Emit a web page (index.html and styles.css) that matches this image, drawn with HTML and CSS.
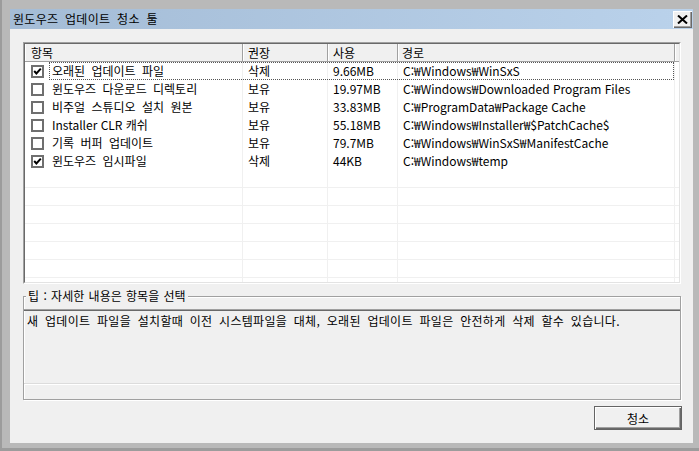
FILE: index.html
```html
<!DOCTYPE html>
<html lang="ko">
<head>
    <meta charset="UTF-8">
    <title>윈도우즈 업데이트 청소 툴</title>
    <link rel="stylesheet" href="styles.css">
</head>
<body>
    <div class="window">
        <div class="titlebar">
            <span class="title">윈도우즈 업데이트 청소 툴</span>
            <button class="close">
                <svg width="11" height="9" viewBox="0 0 11 9"><path d="M1 0.5 L10 8.5 M10 0.5 L1 8.5" stroke="#000" stroke-width="2"/></svg>
            </button>
        </div>
        <div class="content">
            <div class="list">
                <div class="list-body">
                    <div class="row head">
                        <div class="cell">항목</div>
                        <div class="cell">권장</div>
                        <div class="cell">사용</div>
                        <div class="cell">경로</div>
                        <div class="cell"></div>
                    </div>
                    <div class="row focus">
                        <div class="cell"><span class="check on"></span>오래된 업데이트 파일</div>
                        <div class="cell">삭제</div>
                        <div class="cell">9.66MB</div>
                        <div class="cell path">C:₩Windows₩WinSxS</div>
                        <div class="cell"></div>
                    </div>
                    <div class="row">
                        <div class="cell"><span class="check"></span>윈도우즈 다운로드 디렉토리</div>
                        <div class="cell">보유</div>
                        <div class="cell">19.97MB</div>
                        <div class="cell path">C:₩Windows₩Downloaded Program Files</div>
                        <div class="cell"></div>
                    </div>
                    <div class="row">
                        <div class="cell"><span class="check"></span>비주얼 스튜디오 설치 원본</div>
                        <div class="cell">보유</div>
                        <div class="cell">33.83MB</div>
                        <div class="cell path">C:₩ProgramData₩Package Cache</div>
                        <div class="cell"></div>
                    </div>
                    <div class="row">
                        <div class="cell path"><span class="check"></span>Installer CLR 캐쉬</div>
                        <div class="cell">보유</div>
                        <div class="cell">55.18MB</div>
                        <div class="cell path">C:₩Windows₩Installer₩$PatchCache$</div>
                        <div class="cell"></div>
                    </div>
                    <div class="row">
                        <div class="cell"><span class="check"></span>기록 버퍼 업데이트</div>
                        <div class="cell">보유</div>
                        <div class="cell">79.7MB</div>
                        <div class="cell path">C:₩Windows₩WinSxS₩ManifestCache</div>
                        <div class="cell"></div>
                    </div>
                    <div class="row">
                        <div class="cell"><span class="check on"></span>윈도우즈 임시파일</div>
                        <div class="cell">삭제</div>
                        <div class="cell">44KB</div>
                        <div class="cell path">C:₩Windows₩temp</div>
                        <div class="cell"></div>
                    </div>
                    <div class="row empty"><div class="cell"></div><div class="cell"></div><div class="cell"></div><div class="cell"></div><div class="cell"></div></div>
                    <div class="row empty"><div class="cell"></div><div class="cell"></div><div class="cell"></div><div class="cell"></div><div class="cell"></div></div>
                    <div class="row empty"><div class="cell"></div><div class="cell"></div><div class="cell"></div><div class="cell"></div><div class="cell"></div></div>
                    <div class="row empty"><div class="cell"></div><div class="cell"></div><div class="cell"></div><div class="cell"></div><div class="cell"></div></div>
                    <div class="row empty"><div class="cell"></div><div class="cell"></div><div class="cell"></div><div class="cell"></div><div class="cell"></div></div>
                    <div class="row empty"><div class="cell"></div><div class="cell"></div><div class="cell"></div><div class="cell"></div><div class="cell"></div></div>
                    <div class="row empty"><div class="cell"></div><div class="cell"></div><div class="cell"></div><div class="cell"></div><div class="cell"></div></div>
                </div>
            </div>

            <fieldset class="tip">
                <legend>팁 : 자세한 내용은 항목을 선택</legend>
                <div class="tip-text">새 업데이트 파일을 설치할때 이전 시스템파일을 대체, 오래된 업데이트 파일은 안전하게 삭제 할수 있습니다.</div>
                <div class="tip-status"></div>
            </fieldset>

            <div class="actions">
                <button class="btn">청소</button>
            </div>
        </div>
    </div>
</body>
</html>
```

FILE: styles.css
```css
body {
    margin: 0;
    background: #b9b9b9;
    font-family: "Noto Sans CJK KR", "Noto Sans", sans-serif;
    font-size: 12px;
    word-spacing: 3px;
    color: #000;
}
.window {
    width: 699px;
    height: 451px;
    box-sizing: border-box;
    padding: 9px 6px 8px 10px;
    display: flex;
    flex-direction: column;
    box-shadow: inset 2px 0 0 #9c9c9c, inset 0 -3px 0 #9c9c9c;
}
.titlebar {
    height: 20px;
    flex: none;
    background: linear-gradient(to right, #a4bcd6, #bad2eb);
    display: flex;
    align-items: center;
    justify-content: space-between;
    padding: 0 1px 0 3px;
}
.title {
    line-height: 20px;
    letter-spacing: 0.3px;
}
.close {
    width: 19px;
    height: 17px;
    padding: 0;
    border: none;
    background: #f0f0f0;
    box-shadow: inset 1px 1px 0 #fff, inset -1px -1px 0 #696969, inset -2px -2px 0 #a0a0a0;
    display: flex;
    align-items: center;
    justify-content: center;
}
.content {
    flex: 1;
    background: #f0f0f0;
    padding: 13px 12px 0 13px;
    display: flex;
    flex-direction: column;
}

/* list view */
.list {
    height: 242px;
    box-sizing: border-box;
    border: 1px solid;
    border-color: #a0a0a0 #fff #fff #a0a0a0;
    flex: none;
}
.list-body {
    height: 100%;
    box-sizing: border-box;
    border: 1px solid;
    border-color: #696969 #e3e3e3 #e3e3e3 #696969;
    background: #fff;
    overflow: hidden;
}
.row {
    display: grid;
    grid-template-columns: 218px 85px 70px 277px 1fr;
    height: 18px;
    line-height: 18px;
    position: relative;
}
.row .cell {
    padding-left: 5px;
    border-right: 1px solid #f0f0f0;
    white-space: nowrap;
    overflow: hidden;
    display: flex;
    align-items: center;
}
.row .cell.path {
    word-spacing: 0;
}
.row .cell:first-child {
    padding-left: 6px;
}
.row .cell:last-child {
    border-right: none;
}
.row.empty {
    box-sizing: border-box;
    border-bottom: 1px solid #f0f0f0;
}
.row.head {
    background: #f0f0f0;
    box-sizing: border-box;
    border-bottom: 1px solid #a0a0a0;
}
.row.head .cell {
    border-right: 1px solid #a0a0a0;
    box-shadow: inset 1px 0 0 #fff;
}
.row.head .cell:nth-child(4) {
    padding-left: 4px;
}
.row.head .cell:last-child {
    border-right: 1px solid #a0a0a0;
}
.row.focus::after {
    content: "";
    position: absolute;
    left: 24px;
    right: 5px;
    top: 0;
    bottom: 0;
    border: 1px dotted #555;
}
.check {
    width: 9px;
    height: 9px;
    border: 2px solid #6f6f6f;
    background: #fff;
    margin-right: 8px;
    flex: none;
}
.check.on {
    background: #fff url("data:image/svg+xml,%3Csvg xmlns='http://www.w3.org/2000/svg' width='9' height='9' viewBox='0 0 9 9'%3E%3Cpath d='M1.2 4 L3.4 6.4 L7.8 1.6' fill='none' stroke='%23000' stroke-width='2'/%3E%3C/svg%3E") no-repeat center;
}

/* tip box */
.tip {
    margin: 5px 0 0;
    padding: 6px 0 0;
    border: 1px solid #a0a0a0;
    box-shadow: inset 1px 1px 0 #fff, 1px 1px 0 #fff;
    flex: none;
}
.tip legend {
    padding: 0 2px;
    margin-left: 2px;
    line-height: 14px;
    word-spacing: 1px;
    background: #f0f0f0;
}
.tip-text {
    height: 74px;
    box-sizing: border-box;
    border-top: 1px solid #a0a0a0;
    box-shadow: inset 0 1px 0 #696969;
    padding: 3px 0 0 3px;
    line-height: 16px;
    letter-spacing: 0.3px;
    white-space: nowrap;
}
.tip-status {
    height: 16px;
    box-sizing: border-box;
    border-top: 1px solid #dcdcdc;
    box-shadow: inset 0 1px 0 #fff;
}

.actions {
    display: flex;
    justify-content: flex-end;
    margin-top: 6px;
    margin-right: -1px;
}
.btn {
    width: 88px;
    height: 24px;
    font-family: inherit;
    font-size: 12px;
    color: #000;
    background: #f0f0f0;
    border: 1px solid #646464;
    box-shadow: inset 1px 1px 0 #fff, inset -1px -1px 0 #696969, inset -2px -2px 0 #a0a0a0;
    padding: 0;
}
```
